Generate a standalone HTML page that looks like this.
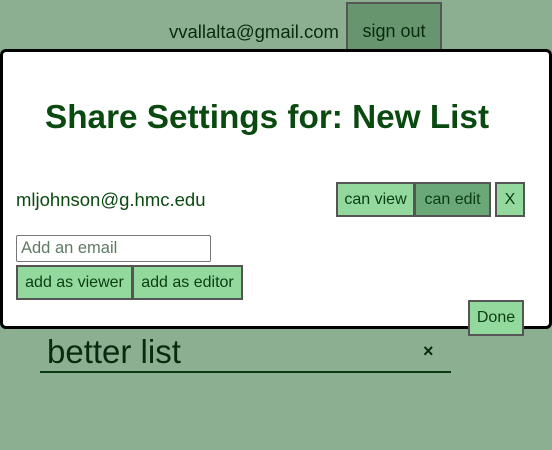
<!DOCTYPE html>
<html><head><style>
body{margin:0;width:552px;height:450px;background:#8caf92;font-family:"Liberation Sans",sans-serif;position:relative;overflow:hidden}
.a{position:absolute;box-sizing:border-box;white-space:nowrap}
.btn{position:absolute;box-sizing:border-box;background:#93d89d;border:2px solid #555;color:#0b3d12;font-size:16px;display:flex;align-items:center;justify-content:center}
</style></head><body>
<div class="a" style="left:169px;top:21px;font-size:18.5px;color:#0a2a10">vvallalta@gmail.com</div>
<div class="btn" style="left:346px;top:2px;width:96px;height:50px;background:#67966e;font-size:18px;color:#0a2a10;padding-top:8px">sign out</div>
<div class="a" style="left:0;top:49px;width:552px;height:280px;background:#fff;border:3px solid #000;border-radius:6px"></div>
<div class="a" style="left:45px;top:99px;font-size:33.3px;font-weight:bold;color:#0a4a10">Share Settings for: New List</div>
<div class="a" style="left:16px;top:189px;font-size:18.5px;color:#0a4a10">mljohnson@g.hmc.edu</div>
<div class="btn" style="left:336px;top:182px;width:79px;height:35px">can view</div>
<div class="btn" style="left:414px;top:182px;width:77px;height:35px;background:#6aa877">can edit</div>
<div class="btn" style="left:495px;top:182px;width:30px;height:35px">X</div>
<div class="a" style="left:16px;top:235px;width:195px;height:27px;border:1px solid #777;border-radius:2px;font-size:16.5px;color:#5f7a64;padding:3px 0 0 4px">Add an email</div>
<div class="btn" style="left:16px;top:265px;width:117px;height:35px">add as viewer</div>
<div class="btn" style="left:132px;top:265px;width:111px;height:35px">add as editor</div>
<div class="btn" style="left:468px;top:300px;width:56px;height:36px">Done</div>
<div class="a" style="left:47px;top:333px;font-size:33px;color:#0a2a10">better list</div>
<div class="a" style="left:423px;top:341px;font-size:18px;font-weight:bold;color:#0a2a10">×</div>
<div class="a" style="left:40px;top:371px;width:411px;height:2px;background:#0a3a10"></div>
</body></html>
